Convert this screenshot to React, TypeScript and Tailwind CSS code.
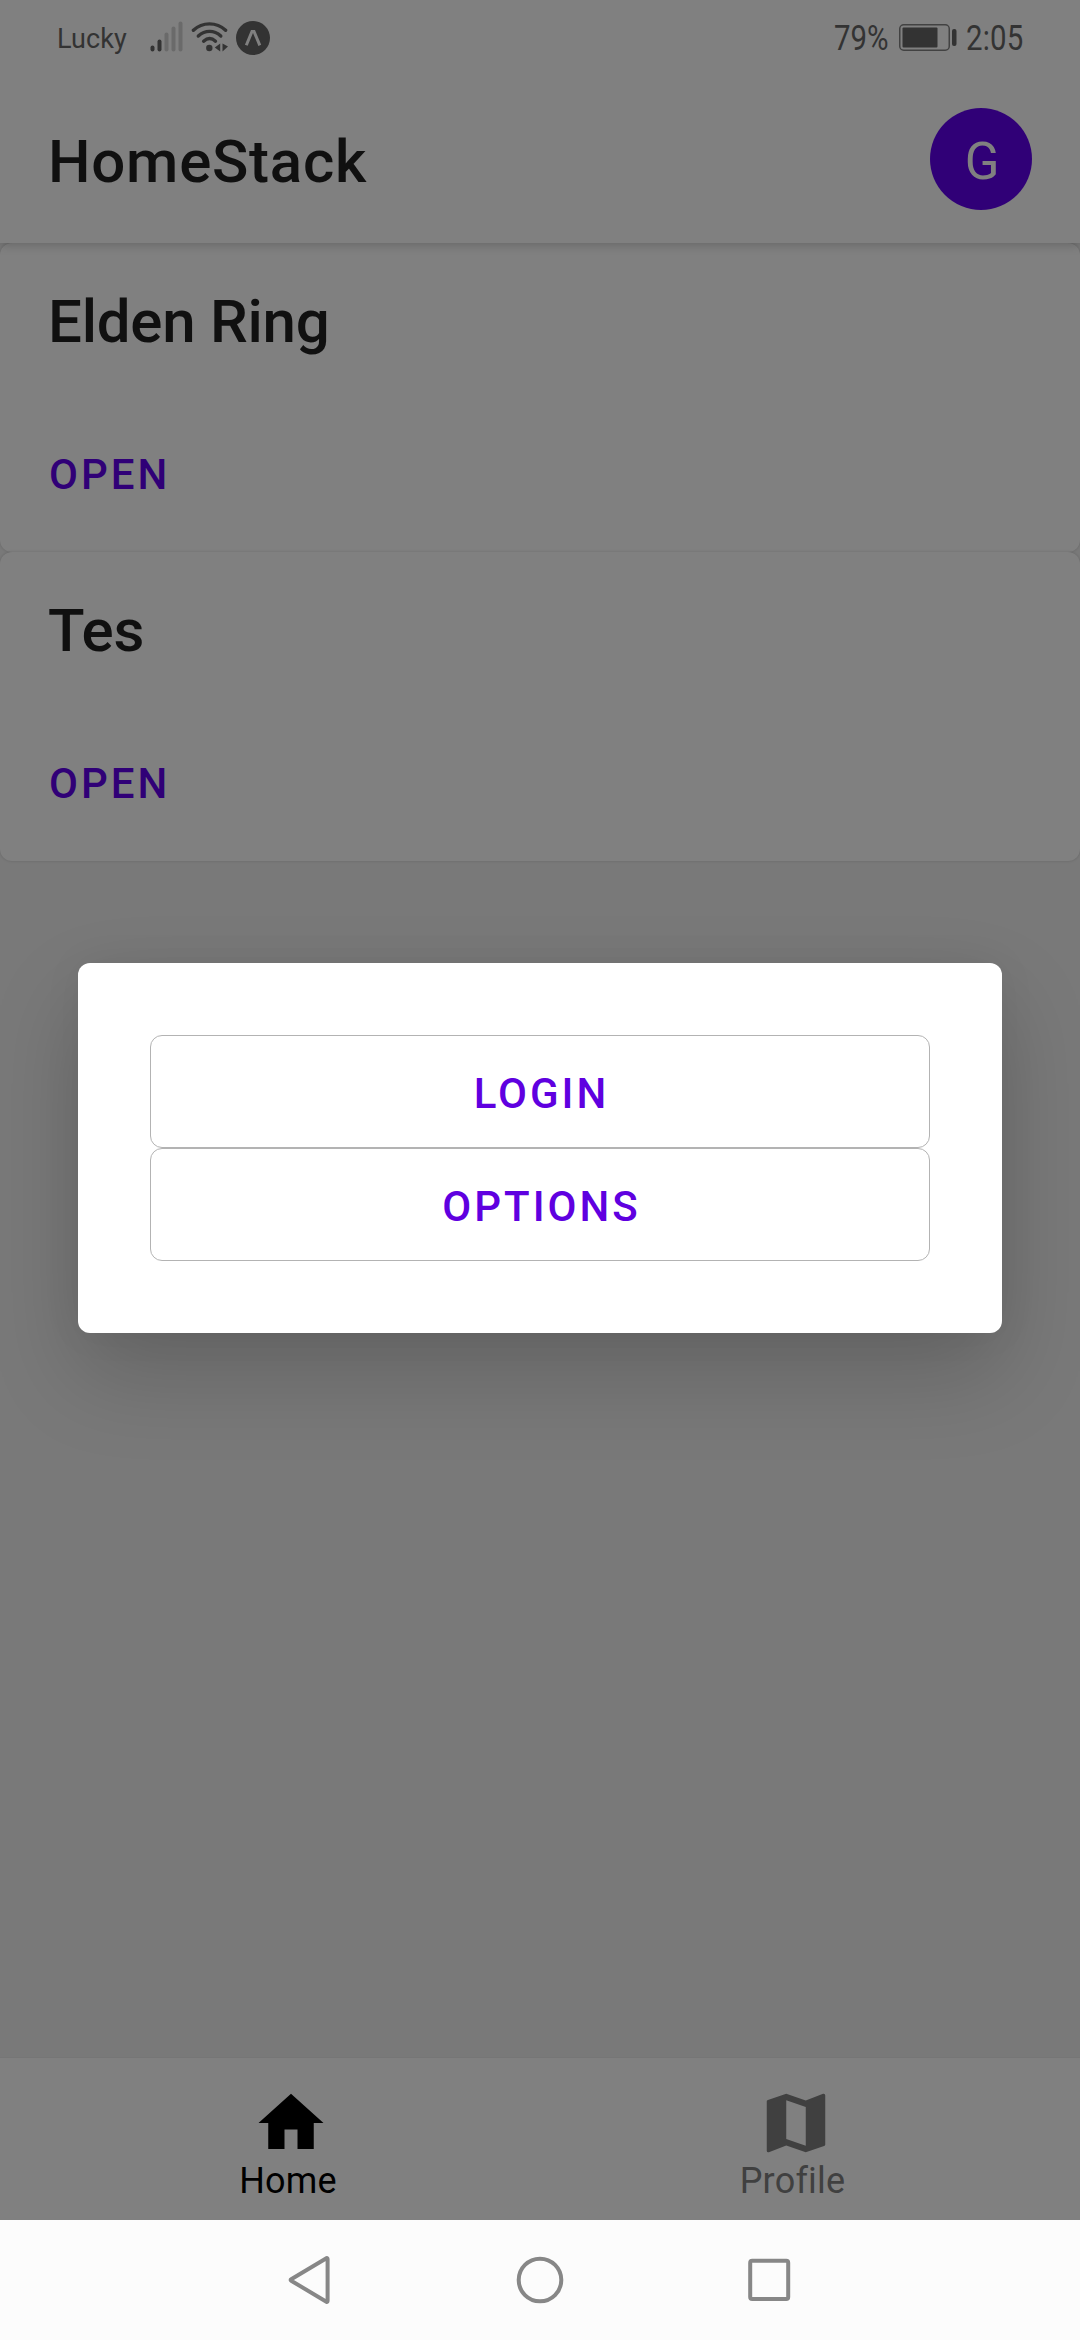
import React from "react";

function SignalIcon() {
  return (
    <svg className="ml-[23px] h-[34px] w-[34px]" viewBox="0 0 34 34">
      <rect x="0.5" y="24.5" width="4" height="6" rx="2" fill="#333" />
      <rect x="7.5" y="18.5" width="4" height="12" rx="2" fill="#333" />
      <rect x="14.5" y="11.5" width="4" height="19" rx="2" fill="#6a6a6a" />
      <rect x="21.5" y="5.5" width="4" height="25" rx="2" fill="#6a6a6a" />
      <rect x="28.5" y="0.5" width="4" height="30" rx="2" fill="#6a6a6a" />
    </svg>
  );
}

function WifiIcon() {
  return (
    <svg className="ml-[7px] h-[34px] w-[38px]" viewBox="0 0 38 34" fill="none" stroke="#333" strokeWidth="3.4" strokeLinecap="round">
      <path d="M2.4 9.3C11.5 0.7 25.5 0.7 34.6 9.3" />
      <path d="M7.3 15C14.2 8.8 23 8.8 29.8 15" />
      <path d="M12.6 20.2C16.4 16.9 20.8 16.9 24.5 20.2" />
      <circle cx="18.3" cy="27" r="3.2" fill="#333" stroke="none" />
      <path d="M29.2 22.5V30.5L23.8 26.5ZM31.5 22.5V30.5L37 25.5Z" fill="#333" stroke="none" />
    </svg>
  );
}

function AppBadgeIcon() {
  return (
    <svg className="ml-[7px] h-[34px] w-[34px]" viewBox="0 0 34 34">
      <circle cx="17" cy="17" r="17" fill="#333" />
      <path d="M10.3 24.3L16 10.5H18L23.8 24.3" fill="none" stroke="#808080" strokeWidth="3" />
    </svg>
  );
}

function BatteryIcon() {
  return (
    <svg className="h-[28px] w-[59px]" viewBox="0 0 59 28">
      <rect x="0.75" y="0.75" width="49.5" height="25.5" rx="4" fill="none" stroke="#424242" strokeWidth="1.5" />
      <rect x="3.5" y="3.5" width="35" height="20" rx="1" fill="#333" />
      <rect x="53" y="5" width="4.5" height="17" rx="2" fill="#333" />
    </svg>
  );
}

function StatusBar() {
  return (
    <div className="flex h-[75px] items-start pl-[57px] pr-[54px] text-[#333333]">
      <span className="mt-[19px] w-[70px] whitespace-nowrap text-[27px] leading-[40px] tracking-[0.1px]">Lucky</span>
      <div className="mt-[21px] flex">
        <SignalIcon />
        <WifiIcon />
        <AppBadgeIcon />
      </div>
      <div className="ml-auto flex">
        <span className="mt-[19px] w-[65px] origin-left scale-x-[0.84] whitespace-nowrap text-[35px] leading-[40px]">79%</span>
        <div className="mt-[24px]">
          <BatteryIcon />
        </div>
        <span className="ml-[8px] mt-[19px] w-[60px] origin-left scale-x-[0.84] whitespace-nowrap text-[35px] leading-[40px] tracking-[0.2px]">2:05</span>
      </div>
    </div>
  );
}

function Header() {
  return (
    <header className="relative z-10 h-[243px] bg-[#808080] shadow-[0_2px_10px_rgba(0,0,0,0.2)]">
      <StatusBar />
      <div className="flex h-[168px] items-start justify-between pl-[48px] pr-[48px]">
        <h1 className="mt-[47px] text-[60px] font-medium leading-[80px] tracking-[0.75px] text-[#101010]">HomeStack</h1>
        <div className="mt-[33px] flex h-[102px] w-[102px] justify-center rounded-full bg-[#300077] pl-[2px] pt-[3px] text-[51px] leading-[102px] text-[#808080]">G</div>
      </div>
    </header>
  );
}

function GameCard({ title }: { title: string }) {
  return (
    <article className="flex h-[309px] flex-col rounded-[12px] bg-[#808080] pl-[48px] shadow-[0_0_3px_rgba(0,0,0,0.16)]">
      <h2 className="mt-[39px] text-[60px] font-medium leading-[80px] tracking-[-0.25px] text-[#101010]">{title}</h2>
      <button className="ml-[1px] mt-[83px] self-start text-[42px] font-medium leading-[60px] tracking-[3px] text-[#300077]">OPEN</button>
    </article>
  );
}

function DialogButton({ label }: { label: string }) {
  return (
    <button className="flex h-[113px] w-full items-center justify-center rounded-[12px] border border-[#b3b3b3] pl-[3px] pt-[4px] text-[42px] font-medium leading-[60px] tracking-[3px] text-[#5f00e0]">
      {label}
    </button>
  );
}

function Dialog() {
  return (
    <div className="absolute inset-x-0 top-0 z-20 flex h-[2296px] items-center justify-center">
      <div className="h-[370px] w-[924px] rounded-[12px] bg-white p-[72px] shadow-[0_40px_90px_rgba(0,0,0,0.18),0_0_40px_rgba(0,0,0,0.05)]">
        <DialogButton label="LOGIN" />
        <DialogButton label="OPTIONS" />
      </div>
    </div>
  );
}

function TabBar() {
  return (
    <nav className="flex h-[163px] border-t border-[#767676] bg-[#808080] px-[36px] text-[36px] leading-[44px] tracking-[0.2px]">
      <div className="flex flex-1 flex-col items-center pt-[26px] text-black">
        <svg className="ml-[6px] h-[78px] w-[78px] shrink-0" viewBox="0 0 24 24" fill="currentColor">
          <path d="M10,20V14H14V20H19V12H22L12,3L2,12H5V20H10Z" />
        </svg>
        <span className="-mt-[3px]">Home</span>
      </div>
      <div className="flex flex-1 flex-col items-center pt-[26px] text-[#404040]">
        <svg className="ml-[7px] h-[78px] w-[78px] shrink-0" viewBox="0 0 24 24" fill="currentColor">
          <path d="M15,19L9,16.89V5L15,7.11M20.5,3C20.44,3 20.39,3 20.34,3L15,5.1L9,3L3.36,4.9C3.15,4.97 3,5.15 3,5.38V20.5A0.5,0.5 0 0,0 3.5,21C3.55,21 3.61,21 3.66,20.97L9,18.9L15,21L20.64,19.1C20.85,19 21,18.85 21,18.62V3.5A0.5,0.5 0 0,0 20.5,3Z" />
        </svg>
        <span className="-mt-[3px] ml-[1px]">Profile</span>
      </div>
    </nav>
  );
}

function SystemNav() {
  return (
    <div className="flex h-[120px] items-center justify-center gap-[181px] bg-[#fcfcfc]">
      <svg className="h-[48px] w-[48px]" viewBox="0 0 48 48" fill="none" stroke="#878787" strokeWidth="4" strokeLinejoin="round">
        <path d="M4.2 23.3L39.4 2.2Q40.6 1.8 40.6 3.2V44.8Q40.6 46.2 39.4 45.8L4.2 24.7Q3 24 4.2 23.3Z" />
      </svg>
      <svg className="h-[48px] w-[48px]" viewBox="0 0 48 48" fill="none" stroke="#878787" strokeWidth="4">
        <circle cx="24" cy="24" r="21.3" />
      </svg>
      <svg className="h-[48px] w-[48px]" viewBox="0 0 48 48" fill="none" stroke="#878787" strokeWidth="4">
        <rect x="5.2" y="4.8" width="38" height="38.3" rx="2" />
      </svg>
    </div>
  );
}

export default function App() {
  return (
    <div className="relative flex h-[2340px] w-[1080px] flex-col overflow-hidden bg-[#797979] font-['Roboto',sans-serif]">
      <Header />
      <main className="flex-1">
        <GameCard title="Elden Ring" />
        <GameCard title="Tes" />
      </main>
      <TabBar />
      <SystemNav />
      <Dialog />
    </div>
  );
}
